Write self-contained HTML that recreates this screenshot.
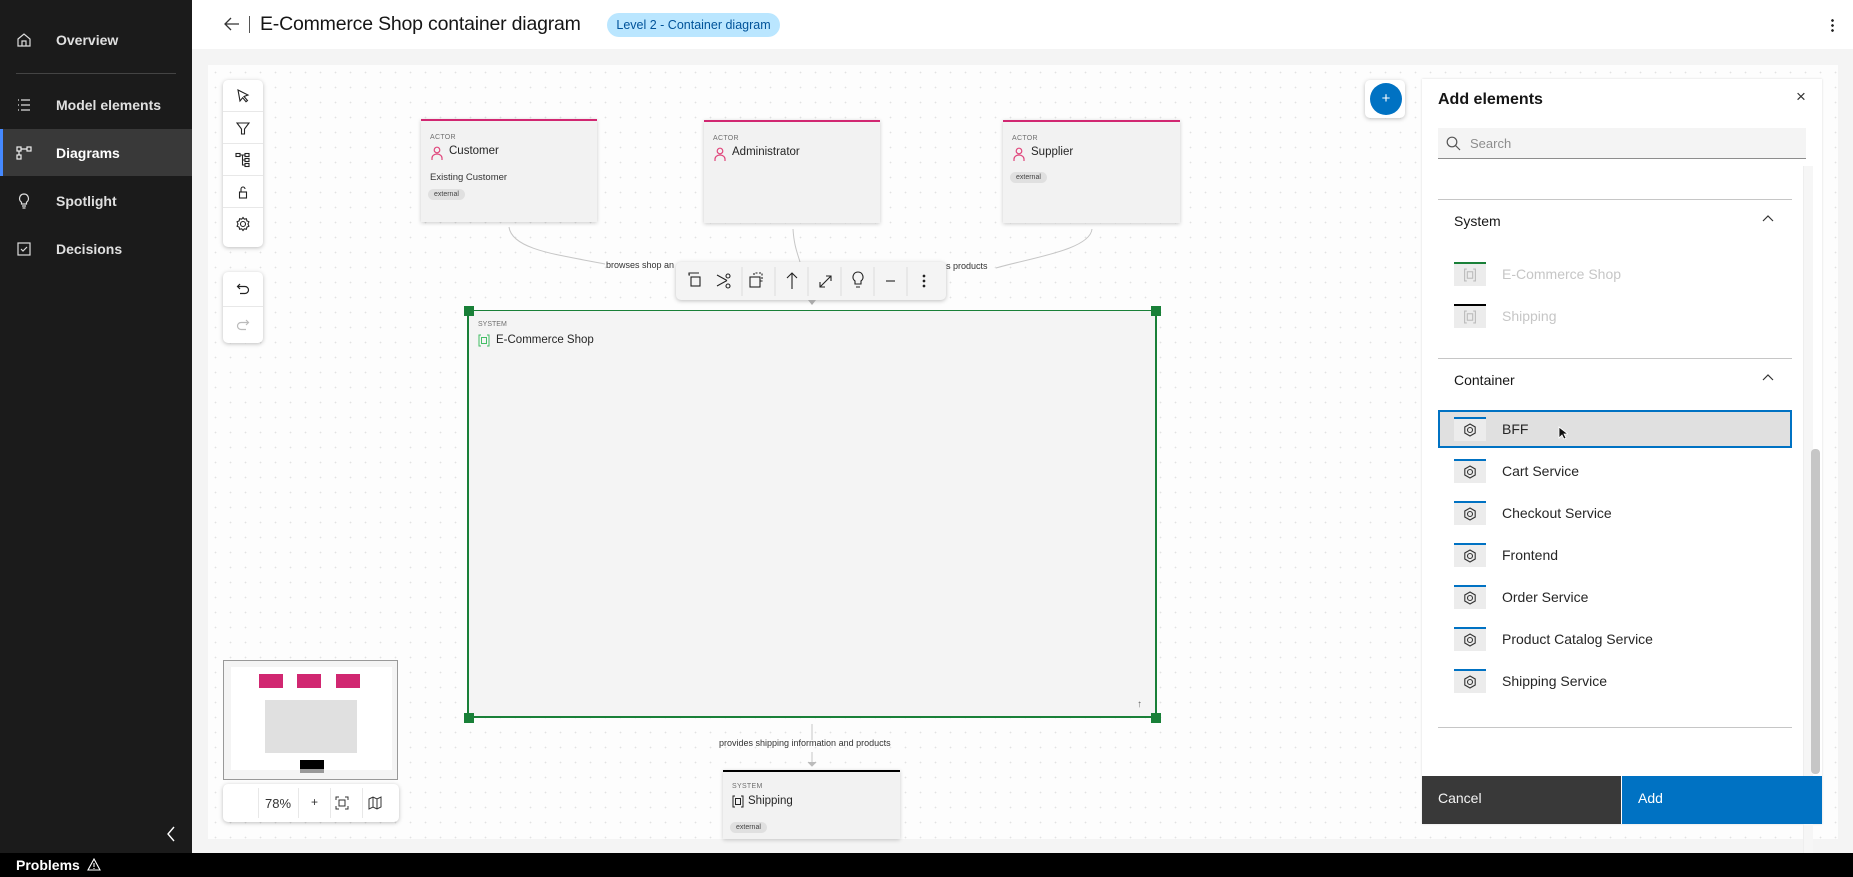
<!DOCTYPE html>
<html><head><meta charset="utf-8">
<style>
*{box-sizing:border-box;margin:0;padding:0}
body{width:1853px;height:877px;overflow:hidden;font-family:"Liberation Sans","DejaVu Sans",sans-serif;background:#f4f4f4;position:relative;color:#161616}
.abs{position:absolute}
.side{left:0;top:0;width:192px;height:853px;background:#1b1b1b}
.nav{position:absolute;left:0;width:192px;height:46px;color:#e0e0e0;font-size:14px;font-weight:bold;display:flex;align-items:center}
.nav span{position:absolute;left:56px}
.nav svg{position:absolute;left:16px}
.bottom{left:0;top:853px;width:1853px;height:24px;background:#000;color:#fff;font-weight:bold;font-size:14px}
.header{left:192px;top:0;width:1661px;height:49px;background:#fff}
.canvas{left:208px;top:65px;width:1630px;height:774px;background-color:#fdfdfd;background-image:radial-gradient(#e2e2e2 0.7px,transparent 1px);background-size:15px 15px}
.tb{background:#fff;border-radius:5px;box-shadow:0 1px 4px rgba(0,0,0,.25)}
.tbi{height:32px;display:flex;align-items:center;justify-content:center;border-bottom:1px solid #e8e8e8}
.card{background:#f2f2f2;box-shadow:0 1px 4px rgba(0,0,0,.2);border-top:2px solid #d12771}
.lbl{font-size:7px;color:#6f6f6f;position:absolute;left:9px;top:13px;letter-spacing:.3px}
.nm{font-size:11.5px;position:absolute;left:28px;top:24px;color:#262626}
.tag{position:absolute;background:#e0e0e0;border-radius:7px;font-size:7px;padding:2px 6px;color:#444}
.panel{left:1422px;top:79px;width:400px;height:745px;background:#fff;box-shadow:0 0 2px rgba(0,0,0,.15)}
.row{position:absolute;left:16px;width:354px;height:38px}
.ic{position:absolute;left:16px;top:7px;width:32px;height:24px;background:#ececec;border-top:2px solid #0072c3;display:flex;align-items:center;justify-content:center}
.rt{position:absolute;left:64px;top:11px;font-size:14px;color:#262626}
</style></head><body>
<div class="abs side">
 <div class="nav" style="top:17px"><svg width="16" height="16" viewBox="0 0 16 16" fill="none" stroke="#ddd" stroke-width="1.2"><path d="M2 7L8 2l6 5v7H2z M6 14V9h4v5"/></svg><span>Overview</span></div>
 <div style="position:absolute;left:16px;top:73px;width:160px;height:1px;background:#444"></div>
 <div class="nav" style="top:82px"><svg width="16" height="16" viewBox="0 0 16 16" stroke="#ddd" stroke-width="1.2"><path d="M2 3h1M2 8h1M2 13h1M5 3h9M5 8h9M5 13h9"/></svg><span>Model elements</span></div>
 <div class="nav" style="top:129px;background:#393939;height:47px;border-left:3px solid #4589ff;color:#fff"><svg width="16" height="16" viewBox="0 0 16 16" fill="none" stroke="#eee" stroke-width="1.2" style="left:13px"><rect x="1" y="2" width="4" height="4"/><rect x="11" y="2" width="4" height="4"/><rect x="1" y="10" width="4" height="4"/><path d="M5 4h6M3 6v4"/></svg><span style="left:53px">Diagrams</span></div>
 <div class="nav" style="top:178px"><svg width="16" height="16" viewBox="0 0 16 16" fill="none" stroke="#ddd" stroke-width="1.2"><path d="M8 1a4.5 4.5 0 0 0-2.5 8.2V11h5V9.2A4.5 4.5 0 0 0 8 1zM6 13h4M6.5 15h3"/></svg><span>Spotlight</span></div>
 <div class="nav" style="top:226px"><svg width="16" height="16" viewBox="0 0 16 16" fill="none" stroke="#ddd" stroke-width="1.2"><rect x="2" y="2" width="12" height="12"/><path d="M5 8l2 2 4-4"/></svg><span>Decisions</span></div>
 <svg class="abs" style="left:166px;top:826px" width="10" height="16" viewBox="0 0 10 16" fill="none" stroke="#fff" stroke-width="1.4"><path d="M8 1L2 8l6 7"/></svg>
</div>
<div class="abs bottom"><span style="position:absolute;left:16px;top:4px">Problems</span><svg class="abs" style="left:87px;top:5px" width="14" height="13" viewBox="0 0 14 13" fill="none" stroke="#fff" stroke-width="1.1"><path d="M7 1L1 12h12z M7 5v4M7 10v1"/></svg></div>
<div class="abs header">
 <svg class="abs" style="left:32px;top:17px" width="16" height="14" viewBox="0 0 16 14" fill="none" stroke="#333" stroke-width="1.3"><path d="M7 1L1 7l6 6M1 7h14"/></svg>
 <div class="abs" style="left:57px;top:16px;width:1px;height:17px;background:#555"></div>
 <div class="abs" style="left:68px;top:13px;font-size:19.5px;color:#161616;letter-spacing:-0.2px">E-Commerce Shop container diagram</div>
 <div class="abs" style="left:415px;top:13px;width:173px;height:24px;border-radius:12px;background:#bae6ff;color:#00539a;font-size:12.5px;line-height:24px;text-align:center">Level 2 - Container diagram</div>
 <div class="abs" style="left:1639px;top:18px;width:3px;height:14px;background:radial-gradient(circle,#222 1.2px,transparent 1.5px) 0 0/3px 5px"></div>
</div>
<div class="abs canvas"></div>
<div class="abs tb" style="left:223px;top:80px;width:40px;height:167px">
 <div class="tbi"><svg width="16" height="16" viewBox="0 0 16 16" fill="none" stroke="#222" stroke-width="1.1"><path d="M3 2l10 5-4 1.5 3.5 4-1.5 1.2-3.3-4L5 13z"/></svg></div>
 <div class="tbi"><svg width="16" height="16" viewBox="0 0 16 16" fill="none" stroke="#222" stroke-width="1.1"><path d="M2 3h12l-4.5 6v5h-3V9z"/></svg></div>
 <div class="tbi"><svg width="16" height="16" viewBox="0 0 16 16" fill="none" stroke="#222" stroke-width="1.1"><rect x="1" y="1.5" width="4" height="3"/><rect x="10" y="1.5" width="4" height="3"/><rect x="10" y="6.5" width="4" height="3"/><rect x="10" y="11.5" width="4" height="3"/><path d="M5 3h5M7.5 3v10h2.5M7.5 8h2.5"/></svg></div>
 <div class="tbi"><svg width="16" height="16" viewBox="0 0 16 16" fill="none" stroke="#222" stroke-width="1.1"><rect x="4.5" y="8" width="7" height="6"/><path d="M6 8V5a2 2 0 0 1 4 0"/></svg></div>
 <div class="tbi" style="border:0"><svg width="16" height="16" viewBox="0 0 16 16" fill="none" stroke="#222" stroke-width="1.1"><circle cx="8" cy="8" r="2.5"/><path d="M8 1.5l1.3 1.7 2.1-.4.5 2.1 2 .9-.9 2.2.9 2.2-2 .9-.5 2.1-2.1-.4L8 14.5l-1.3-1.7-2.1.4-.5-2.1-2-.9.9-2.2-.9-2.2 2-.9.5-2.1 2.1.4z"/></svg></div>
</div>
<div class="abs tb" style="left:223px;top:272px;width:40px;height:71px">
 <div class="tbi" style="height:35px"><svg width="14" height="14" viewBox="0 0 14 14" fill="none" stroke="#222" stroke-width="1.2"><path d="M4 2L1.5 4.5 4 7M1.5 4.5H9a3.5 3.5 0 0 1 0 7H4"/></svg></div>
 <div class="tbi" style="height:35px;border:0"><svg width="14" height="14" viewBox="0 0 14 14" fill="none" stroke="#bbb" stroke-width="1.2"><path d="M10 2l2.5 2.5L10 7M12.5 4.5H5a3.5 3.5 0 0 0 0 7h5"/></svg></div>
</div>
<svg class="abs" style="left:0;top:0" width="1853" height="877" fill="none" stroke="#c6c6c6" stroke-width="1">
 <path d="M509 227 C512 250 560 255 605 264"/>
 <path d="M793 229 C794 245 797 252 800 262"/>
 <path d="M1092 229 C1090 250 1030 258 996 268"/>
 <path d="M812 724 V740 M812 752 V764"/>
 <path d="M808 762 L812 766 L816 762" fill="#bbb" stroke="#bbb"/>
</svg>
<div class="abs" style="left:606px;top:260px;font-size:9px;color:#333">browses shop an</div>
<div class="abs" style="left:946px;top:261px;font-size:9px;color:#333">s products</div>
<div class="abs" style="left:719px;top:738px;font-size:9px;color:#333">provides shipping information and products</div>
<div class="abs card" style="left:421px;top:119px;width:176px;height:103px">
 <div class="lbl">ACTOR</div>
 <svg class="abs" style="left:10px;top:25px" width="12" height="14" viewBox="0 0 12 14" fill="none" stroke="#e0457b" stroke-width="1.2"><circle cx="6" cy="4" r="2.8"/><path d="M1 14v-2a5 4 0 0 1 10 0v2"/></svg>
 <div class="nm">Customer</div>
 <div class="abs" style="left:9px;top:51px;font-size:9.5px;color:#333">Existing Customer</div>
 <div class="tag" style="left:7px;top:68px">external</div>
</div>
<div class="abs card" style="left:704px;top:120px;width:176px;height:103px">
 <div class="lbl">ACTOR</div>
 <svg class="abs" style="left:10px;top:25px" width="12" height="14" viewBox="0 0 12 14" fill="none" stroke="#e0457b" stroke-width="1.2"><circle cx="6" cy="4" r="2.8"/><path d="M1 14v-2a5 4 0 0 1 10 0v2"/></svg>
 <div class="nm">Administrator</div>
</div>
<div class="abs card" style="left:1003px;top:120px;width:177px;height:103px">
 <div class="lbl">ACTOR</div>
 <svg class="abs" style="left:10px;top:25px" width="12" height="14" viewBox="0 0 12 14" fill="none" stroke="#e0457b" stroke-width="1.2"><circle cx="6" cy="4" r="2.8"/><path d="M1 14v-2a5 4 0 0 1 10 0v2"/></svg>
 <div class="nm">Supplier</div>
 <div class="tag" style="left:7px;top:50px">external</div>
</div>
<div class="abs" style="left:467px;top:310px;width:690px;height:408px;background:#f4f4f4;border:2px solid #198038;border-top-width:1px;border-right-width:2px"></div>
<div class="abs" style="left:478px;top:321px;font-size:7px;color:#6f6f6f">SYSTEM</div>
<svg class="abs" style="left:478px;top:334px" width="12" height="13" viewBox="0 0 12 13" fill="none" stroke="#42be65" stroke-width="1"><path d="M3 1H1v11h2M9 1h2v11H9"/><rect x="3.5" y="3.5" width="5" height="6"/></svg>
<div class="abs" style="left:496px;top:334px;font-size:11.5px;color:#262626">E-Commerce Shop</div>
<div class="abs" style="left:1137px;top:699px;font-size:10px;color:#666">↑</div>
<div class="abs" style="left:464px;top:306px;width:10px;height:10px;background:#198038"></div>
<div class="abs" style="left:1151px;top:306px;width:10px;height:10px;background:#198038"></div>
<div class="abs" style="left:464px;top:713px;width:10px;height:10px;background:#198038"></div>
<div class="abs" style="left:1151px;top:713px;width:10px;height:10px;background:#198038"></div>
<div class="abs" style="left:676px;top:262px;width:270px;height:38px;background:#f4f4f4;border-radius:5px;box-shadow:0 1px 4px rgba(0,0,0,.25)">
 <svg class="abs" style="left:0;top:0" width="270" height="38" fill="none" stroke="#222" stroke-width="1.1">
  <path d="M14 13h-1v-2h10" /><rect x="15" y="15" width="9" height="9"/>
  <circle cx="52" cy="14" r="2"/><circle cx="52" cy="24" r="2"/><path d="M41 13l10 5.5M41 24l10-5.5"/>
  <path d="M66 5v29M99 5v29M132 5v29M165 5v29M198 5v29M231 5v29" stroke="#ddd"/>
  <rect x="74" y="15" width="10" height="10"/><path d="M78 13v-2h8v8h-2" stroke-dasharray="2 1.5"/>
  <path d="M116 11v16M111 16l5-5 5 5"/>
  <path d="M144 25l11-11M144 20v5h5M150 14h5v5"/>
  <path d="M182 10a5 5 0 0 0-3 9v3h6v-3a5 5 0 0 0-3-9zM180 25h4"/>
  <path d="M210 19h9"/>
  <circle cx="248" cy="14" r=".8" fill="#222"/><circle cx="248" cy="19" r=".8" fill="#222"/><circle cx="248" cy="24" r=".8" fill="#222"/>
 </svg>
</div>
<div class="abs" style="left:808px;top:300px;width:0;height:0;border-left:4px solid transparent;border-right:4px solid transparent;border-top:5px solid #aaa"></div>
<div class="abs card" style="left:723px;top:770px;width:177px;height:69px;border-top-color:#000">
 <div class="lbl" style="top:11px">SYSTEM</div>
 <svg class="abs" style="left:9px;top:23px" width="12" height="13" viewBox="0 0 12 13" fill="none" stroke="#222" stroke-width="1"><path d="M3 1H1v11h2M9 1h2v11H9"/><rect x="3.5" y="3.5" width="5" height="6"/></svg>
 <div class="nm" style="left:25px;top:23px">Shipping</div>
 <div class="tag" style="left:7px;top:50px">external</div>
</div>
<div class="abs" style="left:223px;top:660px;width:175px;height:120px;border:1px solid #999;background:#f4f4f4">
 <div class="abs" style="left:7px;top:6px;width:161px;height:103px;background:#fff"></div>
 <div class="abs" style="left:35px;top:13px;width:24px;height:14px;background:#d12771"></div>
 <div class="abs" style="left:73px;top:13px;width:24px;height:14px;background:#d12771"></div>
 <div class="abs" style="left:112px;top:13px;width:24px;height:14px;background:#d12771"></div>
 <div class="abs" style="left:41px;top:39px;width:92px;height:53px;background:#e0e0e0"></div>
 <div class="abs" style="left:76px;top:99px;width:24px;height:13px;background:#000;border-bottom:4px solid #999"></div>
</div>
<div class="abs tb" style="left:223px;top:784px;width:176px;height:38px">
 <div class="abs" style="left:35px;top:4px;width:1px;height:30px;background:#e8e8e8"></div>
 <div class="abs" style="left:42px;top:12px;font-size:13px;color:#333">78%</div>
 <div class="abs" style="left:75px;top:4px;width:1px;height:30px;background:#e8e8e8"></div>
 <div class="abs" style="left:88px;top:11px;font-size:12px;color:#333">+</div>
 <div class="abs" style="left:107px;top:4px;width:1px;height:30px;background:#e8e8e8"></div>
 <svg class="abs" style="left:112px;top:12px" width="14" height="14" viewBox="0 0 14 14" fill="none" stroke="#333" stroke-width="1"><path d="M1 4V1h3M10 1h3v3M13 10v3h-3M4 13H1v-3"/><rect x="4" y="4" width="6" height="6"/></svg>
 <div class="abs" style="left:139px;top:4px;width:1px;height:30px;background:#e8e8e8"></div>
 <svg class="abs" style="left:145px;top:12px" width="14" height="14" viewBox="0 0 14 14" fill="none" stroke="#333" stroke-width="1"><path d="M1 3l4-2 4 2 4-2v10l-4 2-4-2-4 2zM5 1v10M9 3v10"/></svg>
</div>
<div class="abs tb" style="left:1365px;top:80px;width:40px;height:38px"></div>
<div class="abs" style="left:1370px;top:83px;width:32px;height:32px;border-radius:50%;background:#0072c3;color:#fff;font-size:15px;text-align:center;line-height:31px">+</div>
<div class="abs panel">
 <div class="abs" style="left:16px;top:12px;font-size:16px;font-weight:bold">Add elements</div>
 <div class="abs" style="left:374px;top:8px;font-size:17px;color:#333">×</div>
 <div class="abs" style="left:16px;top:49px;width:368px;height:31px;background:#f4f4f4;border-bottom:1px solid #8d8d8d">
  <svg class="abs" style="left:8px;top:8px" width="15" height="15" viewBox="0 0 15 15" fill="none" stroke="#555" stroke-width="1.2"><circle cx="6" cy="6" r="4.8"/><path d="M9.5 9.5l4.5 4.5"/></svg>
  <div class="abs" style="left:32px;top:8px;font-size:13px;color:#8d8d8d">Search</div>
 </div>
 <div class="abs" style="left:381px;top:87px;width:10px;height:687px;background:#f6f6f6;border-left:1px solid #eee"></div>
 <div class="abs" style="left:389px;top:370px;width:9px;height:325px;background:#c6c6c6;border-radius:4px"></div>
 <div class="abs" style="left:16px;top:120px;width:354px;height:1px;background:#c6c6c6"></div>
 <div class="abs" style="left:32px;top:134px;font-size:14px">System</div>
 <svg class="abs" style="left:340px;top:135px" width="12" height="8" viewBox="0 0 12 8" fill="none" stroke="#333" stroke-width="1.2"><path d="M1 7l5-5 5 5"/></svg>
 <div class="row" style="top:176px"><div class="ic" style="border-top-color:#198038"><svg width="14" height="14" viewBox="0 0 12 13" fill="none" stroke="#bbb" stroke-width="1"><path d="M3 1H1v11h2M9 1h2v11H9"/><rect x="3.5" y="3.5" width="5" height="6"/></svg></div><div class="rt" style="color:#c6c6c6">E-Commerce Shop</div></div>
 <div class="row" style="top:218px"><div class="ic" style="border-top-color:#000"><svg width="14" height="14" viewBox="0 0 12 13" fill="none" stroke="#bbb" stroke-width="1"><path d="M3 1H1v11h2M9 1h2v11H9"/><rect x="3.5" y="3.5" width="5" height="6"/></svg></div><div class="rt" style="color:#c6c6c6">Shipping</div></div>
 <div class="abs" style="left:16px;top:279px;width:354px;height:1px;background:#c6c6c6"></div>
 <div class="abs" style="left:32px;top:293px;font-size:14px">Container</div>
 <svg class="abs" style="left:340px;top:294px" width="12" height="8" viewBox="0 0 12 8" fill="none" stroke="#333" stroke-width="1.2"><path d="M1 7l5-5 5 5"/></svg>
 <div class="row" style="top:331px;background:#e0e0e0;border:2px solid #0072c3"><div class="ic" style="left:14px;top:5px"><svg width="14" height="14" viewBox="0 0 14 14" fill="none" stroke="#333" stroke-width="1.1"><path d="M7 1l5.2 3v6L7 13 1.8 10V4z"/><circle cx="7" cy="7" r="2.5"/></svg></div><div class="rt" style="left:62px;top:9px">BFF</div>
  <svg class="abs" style="left:118px;top:14px" width="10" height="14" viewBox="0 0 10 14"><path d="M1 1v11l3-3 2 4 2-1-2-4h4z" fill="#111" stroke="#fff" stroke-width=".8"/></svg></div>
 <div class="row" style="top:373px"><div class="ic"><svg width="14" height="14" viewBox="0 0 14 14" fill="none" stroke="#333" stroke-width="1.1"><path d="M7 1l5.2 3v6L7 13 1.8 10V4z"/><circle cx="7" cy="7" r="2.5"/></svg></div><div class="rt">Cart Service</div></div>
 <div class="row" style="top:415px"><div class="ic"><svg width="14" height="14" viewBox="0 0 14 14" fill="none" stroke="#333" stroke-width="1.1"><path d="M7 1l5.2 3v6L7 13 1.8 10V4z"/><circle cx="7" cy="7" r="2.5"/></svg></div><div class="rt">Checkout Service</div></div>
 <div class="row" style="top:457px"><div class="ic"><svg width="14" height="14" viewBox="0 0 14 14" fill="none" stroke="#333" stroke-width="1.1"><path d="M7 1l5.2 3v6L7 13 1.8 10V4z"/><circle cx="7" cy="7" r="2.5"/></svg></div><div class="rt">Frontend</div></div>
 <div class="row" style="top:499px"><div class="ic"><svg width="14" height="14" viewBox="0 0 14 14" fill="none" stroke="#333" stroke-width="1.1"><path d="M7 1l5.2 3v6L7 13 1.8 10V4z"/><circle cx="7" cy="7" r="2.5"/></svg></div><div class="rt">Order Service</div></div>
 <div class="row" style="top:541px"><div class="ic"><svg width="14" height="14" viewBox="0 0 14 14" fill="none" stroke="#333" stroke-width="1.1"><path d="M7 1l5.2 3v6L7 13 1.8 10V4z"/><circle cx="7" cy="7" r="2.5"/></svg></div><div class="rt">Product Catalog Service</div></div>
 <div class="row" style="top:583px"><div class="ic"><svg width="14" height="14" viewBox="0 0 14 14" fill="none" stroke="#333" stroke-width="1.1"><path d="M7 1l5.2 3v6L7 13 1.8 10V4z"/><circle cx="7" cy="7" r="2.5"/></svg></div><div class="rt">Shipping Service</div></div>
 <div class="abs" style="left:16px;top:648px;width:354px;height:1px;background:#c6c6c6"></div>
 <div class="abs" style="left:0;top:697px;width:199px;height:48px;background:#393939;color:#f4f4f4;font-size:14px;padding:14px 16px">Cancel</div>
 <div class="abs" style="left:200px;top:697px;width:200px;height:48px;background:#0072c3;color:#fff;font-size:14px;padding:14px 16px">Add</div>
</div>
</body></html>
